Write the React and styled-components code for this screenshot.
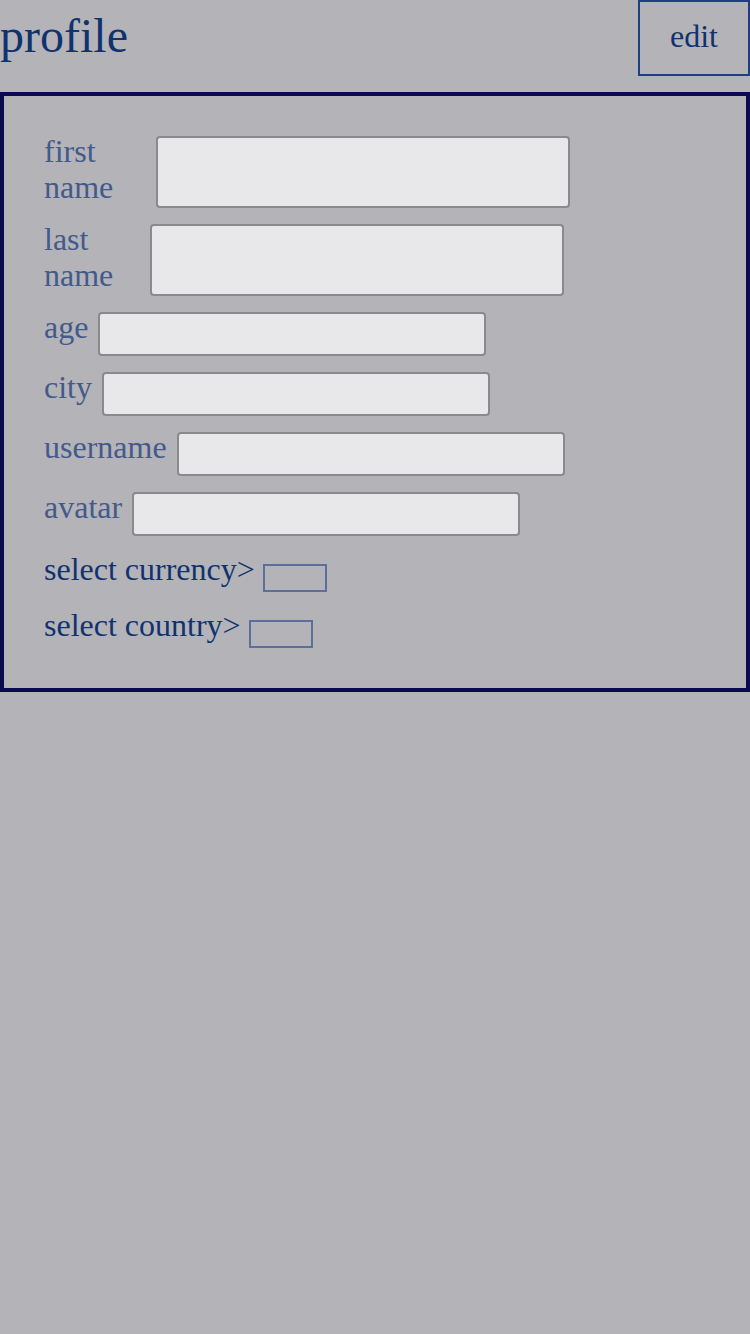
import React from "react"
import styled, { createGlobalStyle } from "styled-components"

const GlobalStyle = createGlobalStyle`
  html, body {
    margin: 0;
    padding: 0;
    background: #b4b3b8;
    font-family: "Liberation Serif", "Times New Roman", serif;
  }
`

const Page = styled.div`
  width: 750px;
  min-height: 1334px;
  background: #b4b3b8;
`

const Header = styled.div`
  display: flex;
  align-items: center;
  justify-content: space-between;
  height: 76px;
  margin-bottom: 16px;
`

const Title = styled.h1`
  margin: 0 0 6px;
  font-size: 48px;
  font-weight: normal;
  color: #10336f;
  line-height: 55px;
`

const EditButton = styled.button`
  box-sizing: border-box;
  width: 112px;
  height: 76px;
  display: flex;
  align-items: center;
  justify-content: center;
  background: transparent;
  border: 2px solid #1f4080;
  font-family: "Liberation Serif", "Times New Roman", serif;
  font-size: 32px;
  color: #10336f;
  padding: 0 0 4px;
`

const Card = styled.form`
  box-sizing: border-box;
  width: 750px;
  border: 4px solid #0b0b4f;
  padding: 40px;
  display: flex;
  flex-direction: column;
`

const Row = styled.div`
  display: flex;
  align-items: flex-start;
  margin-bottom: 16px;
`

const Label = styled.label`
  width: ${(p) => (p.$width ? `${p.$width}px` : "auto")};
  flex-shrink: 0;
  font-size: 32px;
  line-height: 36px;
  color: #435a8b;
  margin: -3px 10px 0 0;
`

const Input = styled.div`
  box-sizing: border-box;
  width: ${(p) => (p.$tall ? 414 : 388)}px;
  height: ${(p) => (p.$tall ? 72 : 44)}px;
  background: #e8e8ea;
  border: 2px solid #8a8a8c;
  border-radius: 4px;
`

const SelectRow = styled.div`
  display: flex;
  align-items: flex-start;
  font-size: 32px;
  line-height: 36px;
  color: #10336f;
  margin-top: ${(p) => (p.$first ? 0 : 16)}px;
`

const SelectText = styled.span`
  margin-top: -1px;
`

const SelectBox = styled.div`
  box-sizing: border-box;
  width: 64px;
  height: 28px;
  border: 2px solid #5c6f9b;
  margin-left: 8px;
  margin-top: 12px;
`

const fields = [
  { label: "first name", width: 102, tall: true },
  { label: "last name", width: 96, tall: true },
  { label: "age" },
  { label: "city" },
  { label: "username" },
  { label: "avatar" },
]

const App = () => (
  <Page>
    <GlobalStyle />
    <Header>
      <Title>profile</Title>
      <EditButton type="button">edit</EditButton>
    </Header>
    <Card>
      {fields.map((f) => (
        <Row key={f.label}>
          <Label $width={f.width}>{f.label}</Label>
          <Input $tall={f.tall} />
        </Row>
      ))}
      <SelectRow $first>
        <SelectText>select currency&gt;</SelectText>
        <SelectBox />
      </SelectRow>
      <SelectRow>
        <SelectText>select country&gt;</SelectText>
        <SelectBox />
      </SelectRow>
    </Card>
  </Page>
)

export default App
